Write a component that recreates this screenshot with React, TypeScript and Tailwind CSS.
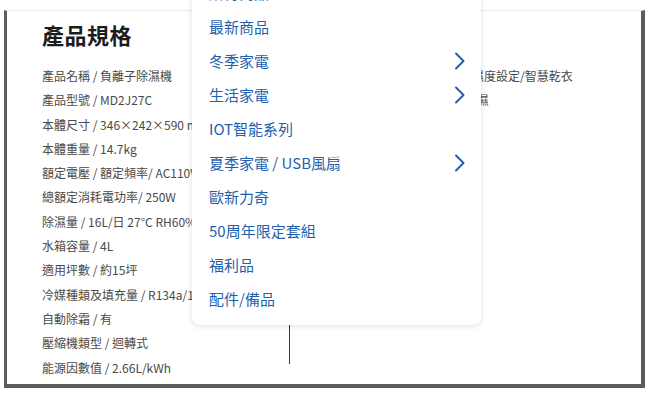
import { ReactNode } from "react";

const specs = [
  "產品名稱 / 負離子除濕機",
  "產品型號 / MD2J27C",
  "本體尺寸 / 346×242×590 mm",
  "本體重量 / 14.7kg",
  "額定電壓 / 額定頻率/  AC110V/60Hz",
  "總額定消耗電功率/ 250W",
  "除濕量 / 16L/日 27°C RH60%",
  "水箱容量 / 4L",
  "適用坪數 / 約15坪",
  "冷媒種類及填充量 / R134a/115g",
  "自動除霜 / 有",
  "壓縮機類型 / 迴轉式",
  "能源因數值 / 2.66L/kWh",
];

const features = [
  "功能特色：負離子淨化、智能溫濕度設定/智慧乾衣",
  "除濕模式：舒適/乾衣、連續、除濕",
];

type MenuItem = { label: string; sub?: boolean };

const menu: MenuItem[] = [
  { label: "所有商品" },
  { label: "最新商品" },
  { label: "冬季家電", sub: true },
  { label: "生活家電", sub: true },
  { label: "IOT智能系列" },
  { label: "夏季家電 / USB風扇", sub: true },
  { label: "歐新力奇" },
  { label: "50周年限定套組" },
  { label: "福利品" },
  { label: "配件/備品" },
];

function Chevron() {
  return (
    <svg width="12" height="18" viewBox="0 0 12 18" fill="none" className="shrink-0">
      <polyline
        points="2,1.5 9.5,9 2,16.5"
        stroke="#1f5fae"
        strokeWidth="2"
        strokeLinecap="round"
        strokeLinejoin="round"
      />
    </svg>
  );
}

function SpecRow({ children }: { children: ReactNode }) {
  return <li className="whitespace-nowrap">{children}</li>;
}

function SpecSheet() {
  return (
    <section className="ml-[4px] mr-[5px] mt-[10px] h-[378px] overflow-hidden border-t border-l-[3px] border-r-[4px] border-b-[4px] border-t-[#ececec] border-l-[#5c5c5c] border-r-[#5c5c5c] border-b-[#5c5c5c] bg-white pt-[9px]">
      <h2 className="pl-[35px] text-[22px] leading-[28px] font-semibold tracking-[0.5px] text-[#1c1c1c]">
        產品規格
      </h2>
      <div className="mt-[16px] flex text-[12px] leading-[24.3px] text-[#4a4a4a]">
        <ul className="w-[282px] shrink-0 overflow-hidden pl-[35px]">
          {specs.map((s) => (
            <SpecRow key={s}>{s}</SpecRow>
          ))}
        </ul>
        <ul className="h-[300px] border-l border-[#3a3a3a] pl-[14px]">
          {features.map((s) => (
            <SpecRow key={s}>{s}</SpecRow>
          ))}
        </ul>
      </div>
    </section>
  );
}

function CategoryMenu() {
  return (
    <nav className="absolute left-[192px] top-[-30px] w-[289px] rounded-[8px] bg-white pt-[6px] pb-[9px] shadow-[0_1px_6px_rgba(0,0,0,0.13)]">
      <ul>
        {menu.map((item) => (
          <li
            key={item.label}
            className="flex h-[34px] items-center justify-between pl-[17px] pr-[15px] text-[15px] text-[#1f5fae]"
          >
            <span>{item.label}</span>
            {item.sub && <Chevron />}
          </li>
        ))}
      </ul>
    </nav>
  );
}

export default function App() {
  return (
    <div
      className="relative h-[394px] w-[650px] overflow-hidden bg-white"
      style={{ fontFamily: '"Noto Sans CJK TC", "Noto Sans", sans-serif' }}
    >
      <SpecSheet />
      <CategoryMenu />
    </div>
  );
}
